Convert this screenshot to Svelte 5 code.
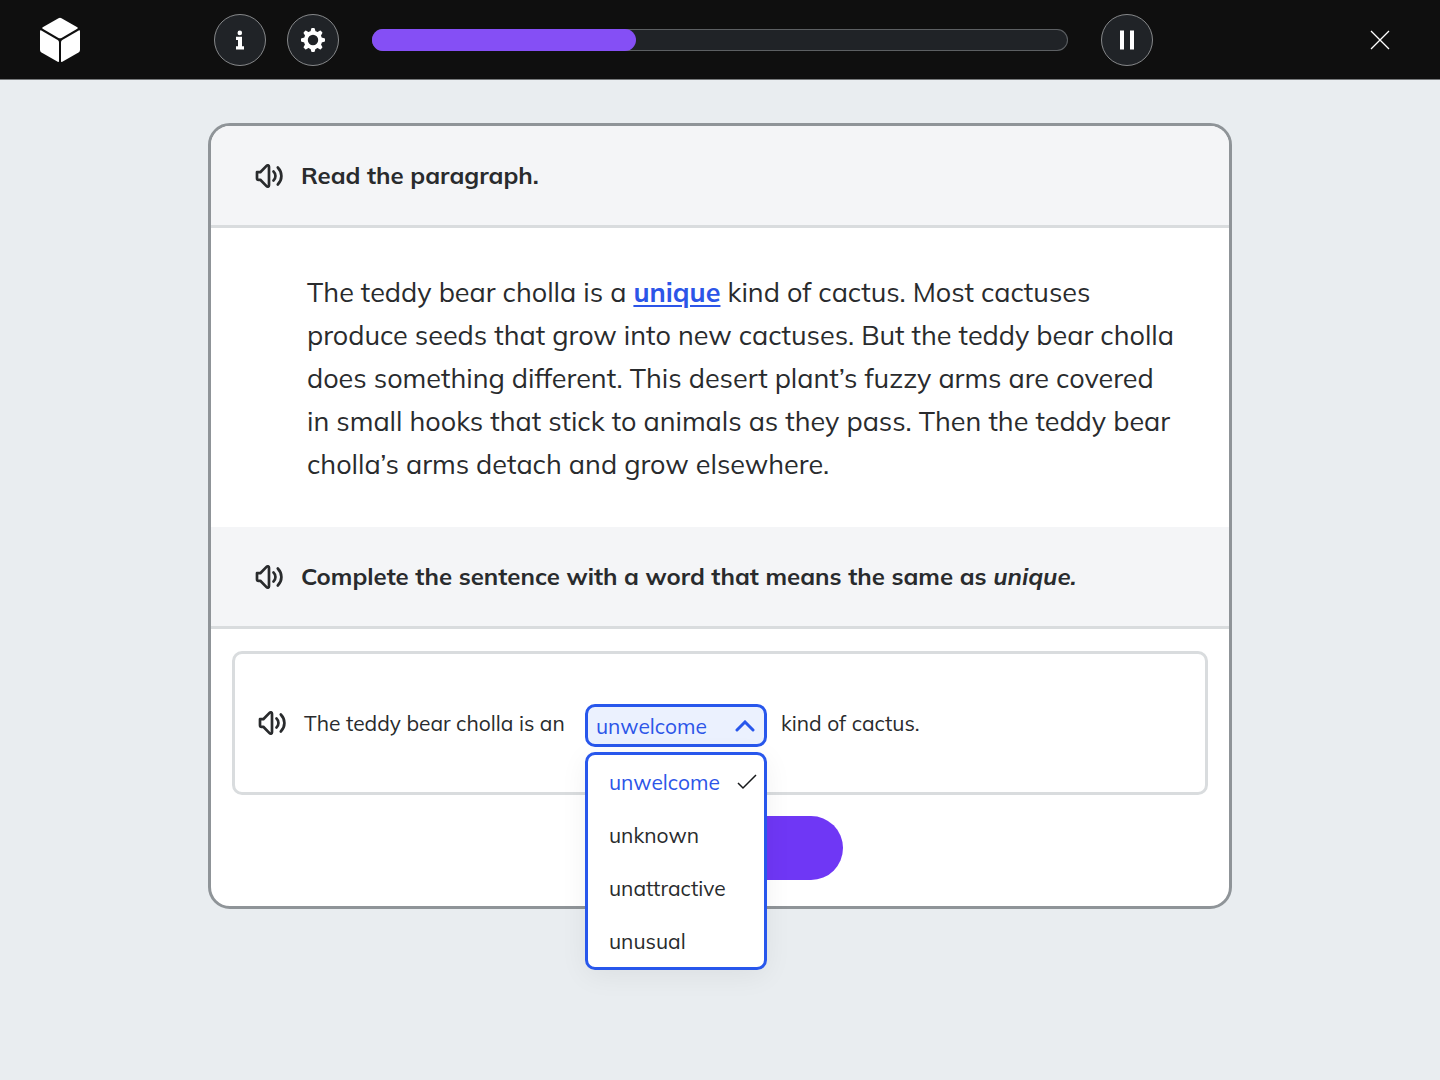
<script>
  const words = ['unwelcome', 'unknown', 'unattractive', 'unusual'];
  let selected = $state('unwelcome');
  const progress = 38;
</script>

{#snippet speaker()}
  <svg class="speaker" viewBox="0 0 28 28" aria-hidden="true">
    <path d="M2 10.2h3.3l6.2-6.3c1-1 2.5-.6 2.5.8v18.6c0 1.4-1.5 1.8-2.5.8l-6.2-6.3H3.6C2.6 17.8 2 17.200 2 16.200z" />
    <path d="M18.500 9.500c2.600 2.500 2.600 6.500 0 9" />
    <path d="M22.800 5.500c4.800 5 4.800 12 0 17" />
  </svg>
{/snippet}

<div class="page">
  <header>
    <a class="logo" href="#home" aria-label="Home">
      <svg viewBox="0 0 40 46" aria-hidden="true">
        <path d="M18.500 1.200q1.500-.9 3 0L37.300 10.300q1.200.7 0 1.400L21.500 20.900q-1.500.9-3 0L2.700 11.700q-1.200-.7 0-1.400z" />
        <path d="M0 14.200q0-1.500 1.300-.8L17.700 22.900q1.300.8 1.300 2.300V44q0 1.500-1.300.8L1.500 35.600Q0 34.700 0 33z" />
        <path d="M40 14.200q0-1.500-1.300-.8L22.300 22.900q-1.300.8-1.300 2.300V44q0 1.500 1.300.8l16.200-9.200Q40 34.700 40 33z" />
      </svg>
    </a>
    <div class="tools">
      <button class="round" aria-label="Information">
        <svg viewBox="0 0 24 24" aria-hidden="true">
          <circle cx="11.800" cy="4.900" r="2.300" />
          <path d="M8 8.700h6v9.600h2v3.200H8v-3.200h2v-6.400H8z" />
        </svg>
      </button>
      <button class="round gear" aria-label="Settings">
        <svg viewBox="0 0 24 24" aria-hidden="true">
          <circle class="ring" cx="12" cy="12" r="7.200" />
          {#each [0, 45, 90, 135, 180, 225, 270, 315] as angle}
            <path transform="rotate({angle} 12 12)" d="M9.200 4.500 10.200.7Q10.400 0 11 0h2q.6 0 .8.7l1 3.800z" />
          {/each}
        </svg>
      </button>
      <div class="track" role="progressbar" aria-label="Lesson progress" aria-valuenow={progress} aria-valuemin="0" aria-valuemax="100">
        <div class="fill" style:width="{progress}%"></div>
      </div>
      <button class="round" aria-label="Pause">
        <svg viewBox="0 0 24 24" aria-hidden="true">
          <path d="M5 2.500h4v19H5zM15 2.500h4v19h-4z" />
        </svg>
      </button>
    </div>
    <button class="close" aria-label="Close">
      <svg viewBox="0 0 20 20" aria-hidden="true"><path d="M1 1l18 18M19 1L1 19" /></svg>
    </button>
  </header>

  <main>
    <div class="heading">
      {@render speaker()}
      <h1>Read the paragraph.</h1>
    </div>
    <p class="passage">
      The teddy bear cholla is a <a href="#unique">unique</a> kind of cactus. Most cactuses<br />
      produce seeds that grow into new cactuses. But the teddy bear cholla<br />
      does something different. This desert plant’s fuzzy arms are covered<br />
      in small hooks that stick to animals as they pass. Then the teddy bear<br />
      cholla’s arms detach and grow elsewhere.
    </p>
    <div class="heading">
      {@render speaker()}
      <h2>Complete the sentence with a word that means the same as <em>unique.</em></h2>
    </div>
    <div class="answer">
      <div class="sentence">
        {@render speaker()}
        <label for="word">The teddy bear cholla is an</label>
        <div class="field">
          <div class="control">
            <select id="word" bind:value={selected}>
              {#each words as word}
                <option>{word}</option>
              {/each}
            </select>
            <svg class="chevron" viewBox="0 0 20 12" aria-hidden="true"><path d="M2 10l8-8 8 8" /></svg>
          </div>
          <div class="menu" role="listbox" aria-label="Words">
            {#each words as word}
              <button role="option" aria-selected={word === selected} class:chosen={word === selected} onclick={() => (selected = word)}>
                <span>{word}</span>
                {#if word === selected}
                  <svg viewBox="0 0 20 16" aria-hidden="true"><path d="M1 9l5 5L19 1" /></svg>
                {/if}
              </button>
            {/each}
          </div>
        </div>
        <span>kind of cactus.</span>
      </div>
      <button class="submit" aria-label="Submit"></button>
    </div>
  </main>
</div>

<style>
  :global(body) {
    background: #e9edf0;
  }
  .page {
    min-height: 100vh;
    background: #e9edf0;
    color: #292b2d;
    font-family: Mulish, Muli, Lato, sans-serif;
    font-size: 21px;
  }
  button,
  select {
    margin: 0;
    padding: 0;
    border: 0;
    font: inherit;
    color: inherit;
    cursor: pointer;
  }
  header {
    display: grid;
    grid-template-columns: 1fr minmax(0, 1024px) 1fr;
    align-items: center;
    box-sizing: border-box;
    height: 80px;
    border-bottom: 1px solid #77797b;
    background: #0f0f0f;
  }
  .logo {
    margin-left: 40px;
    height: 46px;
  }
  .logo svg {
    width: 40px;
    height: 46px;
    fill: #fff;
  }
  .tools {
    display: flex;
    align-items: center;
    gap: 33px;
    padding: 0 79px 0 6px;
  }
  .round {
    display: grid;
    place-items: center;
    flex: none;
    box-sizing: border-box;
    width: 52px;
    height: 52px;
    border: 1px solid #86888a;
    border-radius: 50%;
    background: #202327;
  }
  .round svg {
    width: 24px;
    height: 24px;
    fill: #fff;
  }
  .gear {
    margin-left: -12px;
  }
  .ring {
    fill: none;
    stroke: #fff;
    stroke-width: 4;
  }
  .track {
    flex: 1;
    height: 22px;
    border-radius: 11px;
    background: #202327;
    box-shadow: inset 0 0 0 1px #5c5f62;
  }
  .fill {
    height: 100%;
    border-radius: 11px;
    background: #854ff5;
  }
  .close {
    justify-self: end;
    margin-right: 50px;
    height: 20px;
    background: none;
  }
  .close svg {
    display: block;
    width: 20px;
    height: 20px;
    fill: none;
    stroke: #fff;
    stroke-width: 1.300;
  }
  main {
    box-sizing: border-box;
    max-width: 1024px;
    margin: 43px auto 0;
    border: 3px solid #8f9498;
    border-radius: 22px;
    background: #fff;
  }
  .heading {
    display: flex;
    align-items: center;
    gap: 18px;
    padding: 34px 44px;
    border-bottom: 3px solid #d9dcde;
    background: #f4f5f7;
  }
  .heading:first-child {
    border-radius: 19px 19px 0 0;
  }
  h1,
  h2 {
    margin: 0;
    font-size: 24px;
    line-height: 31px;
    font-weight: 700;
  }
  .speaker {
    flex: none;
    width: 28px;
    height: 28px;
    fill: none;
    stroke: #292b2d;
    stroke-width: 2.700;
    stroke-linecap: round;
    stroke-linejoin: round;
  }
  .passage {
    margin: 0;
    padding: 43px 24px 41px 96px;
    font-size: 27px;
    line-height: 43px;
  }
  .passage a {
    color: #2c55e8;
    font-weight: 700;
    text-decoration-thickness: 2px;
    text-underline-offset: 3px;
  }
  .answer {
    display: grid;
    gap: 21px;
    padding: 22px 21px 26px;
  }
  .sentence {
    display: flex;
    align-items: center;
    gap: 14px;
    box-sizing: border-box;
    min-height: 144px;
    padding: 0 23px;
    border: 3px solid #d9dcde;
    border-radius: 10px;
  }
  .sentence label {
    min-width: 267px;
    margin-left: 4px;
  }
  .field {
    position: relative;
    width: 182px;
    padding-top: 5px;
    color: #2c55e8;
  }
  .control {
    display: grid;
    align-items: center;
  }
  .control > :global(*) {
    grid-area: 1 / 1;
  }
  select {
    appearance: none;
    box-sizing: border-box;
    width: 100%;
    height: 43px;
    padding: 0 8px;
    border: 3px solid #2857ec;
    border-radius: 10px;
    background: #ebf1fe;
  }
  .chevron {
    justify-self: end;
    width: 20px;
    height: 12px;
    margin-right: 12px;
    fill: none;
    stroke: #2857ec;
    stroke-width: 3;
    stroke-linecap: round;
    pointer-events: none;
  }
  .menu {
    position: absolute;
    top: 100%;
    left: 0;
    z-index: 1;
    display: grid;
    box-sizing: border-box;
    width: 100%;
    margin-top: 5px;
    border: 3px solid #2857ec;
    border-radius: 10px;
    background: #fff;
    box-shadow: 0 6px 28px rgb(0 0 0 / 6%);
    color: #292b2d;
  }
  .menu button {
    display: flex;
    align-items: center;
    justify-content: space-between;
    height: 53px;
    padding: 0 7px 0 21px;
    border-radius: 8px;
    background: none;
  }
  .menu .chosen {
    color: #2c55e8;
  }
  .menu svg {
    width: 20px;
    height: 16px;
    fill: none;
    stroke: #17191b;
    stroke-width: 1.500;
  }
  .submit {
    justify-self: center;
    width: 246px;
    height: 64px;
    border-radius: 32px;
    background: #6f37f5;
  }
</style>
